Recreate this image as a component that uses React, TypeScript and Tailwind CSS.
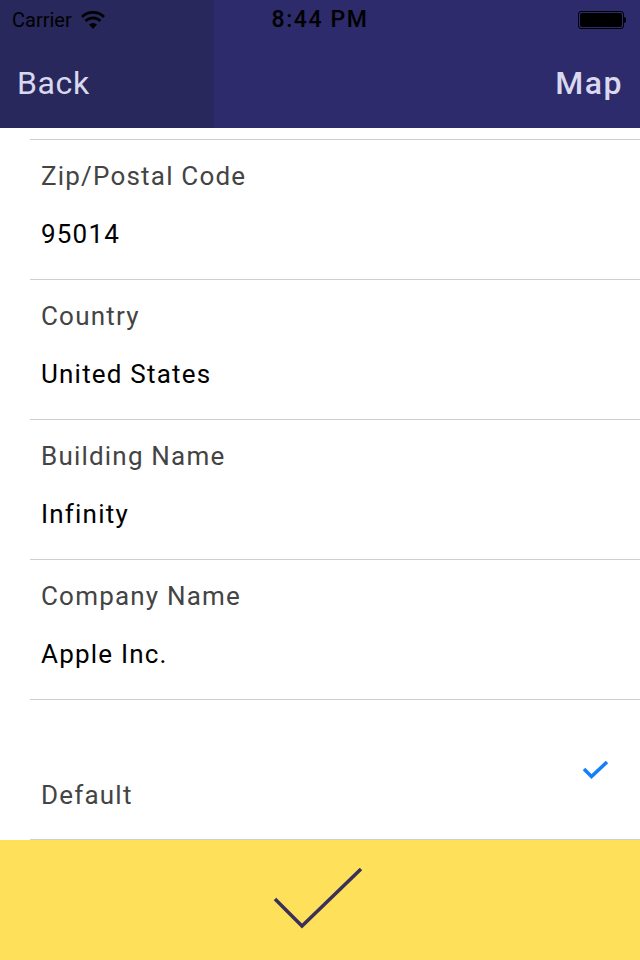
import React from "react";

const fields = [
  { label: "Zip/Postal Code", value: "95014" },
  { label: "Country", value: "United States" },
  { label: "Building Name", value: "Infinity" },
  { label: "Company Name", value: "Apple Inc." },
];

function Wifi() {
  return (
    <svg width="26" height="20" viewBox="0 0 26 20">
      <path d="M13 19 L9 14.5 A6 6 0 0 1 17 14.5 Z" fill="#000" />
      <path d="M5.5 11 A10.5 10.5 0 0 1 20.5 11" stroke="#000" strokeWidth="2.6" fill="none" />
      <path d="M2 7 A15.5 15.5 0 0 1 24 7" stroke="#000" strokeWidth="2.6" fill="none" />
    </svg>
  );
}

function Battery() {
  return (
    <div className="flex items-center">
      <div className="w-[46px] h-[18px] rounded-[3px] border border-black p-[1px]">
        <div className="w-full h-full bg-black rounded-[2px]" />
      </div>
      <div className="w-[2px] h-[6px] bg-black rounded-r-sm" />
    </div>
  );
}

export default function App() {
  return (
    <div className="w-[640px] h-[960px] flex flex-col bg-white" style={{ fontFamily: "Roboto, 'Liberation Sans', sans-serif" }}>
      {/* Header */}
      <div className="relative h-[128px] bg-[#2d2b6b] flex flex-col overflow-hidden">
        <div className="absolute left-0 top-0 w-[214px] h-full bg-[#28285c]" />
        <div className="relative h-[40px] flex items-center justify-between px-[12px]">
          <div className="flex items-center gap-[8px] w-[200px]">
            <span className="text-[20px] text-black">Carrier</span>
            <Wifi />
          </div>
          <span className="text-[23px] font-medium text-black tracking-[1.6px]">8:44 PM</span>
          <div className="w-[200px] flex justify-end pr-[2px]">
            <Battery />
          </div>
        </div>
        <div className="relative flex-1 flex items-center justify-between px-[17px] pb-[2px]">
          <span className="text-[32px] text-[#d9d8ee] tracking-[0.6px]">Back</span>
          <span className="text-[32px] font-medium text-[#d9d8ee] tracking-[1.5px]">Map</span>
        </div>
      </div>

      {/* Fields */}
      <div className="flex-1 flex flex-col pt-[11px]">
        {fields.map((f) => (
          <div key={f.label} className="ml-[30px] h-[140px] border-t border-[#cfcfcf] flex flex-col pl-[11px] pt-[19px]">
            <span className="text-[26px] text-[#444] leading-[34px] tracking-[1.2px]">{f.label}</span>
            <span className="text-[26px] text-black leading-[34px] mt-[24px] tracking-[1.2px]">{f.value}</span>
          </div>
        ))}
        <div className="relative ml-[30px] h-[141px] border-y border-[#cfcfcf] flex flex-col justify-end pl-[11px] pb-[27px]">
          <span className="text-[26px] text-[#444] leading-[34px] tracking-[1.2px]">Default</span>
          <svg className="absolute right-[30px] top-[60px]" width="28" height="20" viewBox="0 0 28 20">
            <path d="M2 9 L9.5 16.5 L25 2" stroke="#157efb" strokeWidth="3.5" fill="none" />
          </svg>
        </div>
      </div>

      {/* Confirm bar */}
      <div className="h-[120px] bg-[#ffe05a] flex items-center justify-center pt-[6px]">
        <svg width="100" height="70" viewBox="0 0 100 70">
          <path d="M5 31 L32 58 L91 1" stroke="#3a3058" strokeWidth="3.5" fill="none" />
        </svg>
      </div>
    </div>
  );
}
